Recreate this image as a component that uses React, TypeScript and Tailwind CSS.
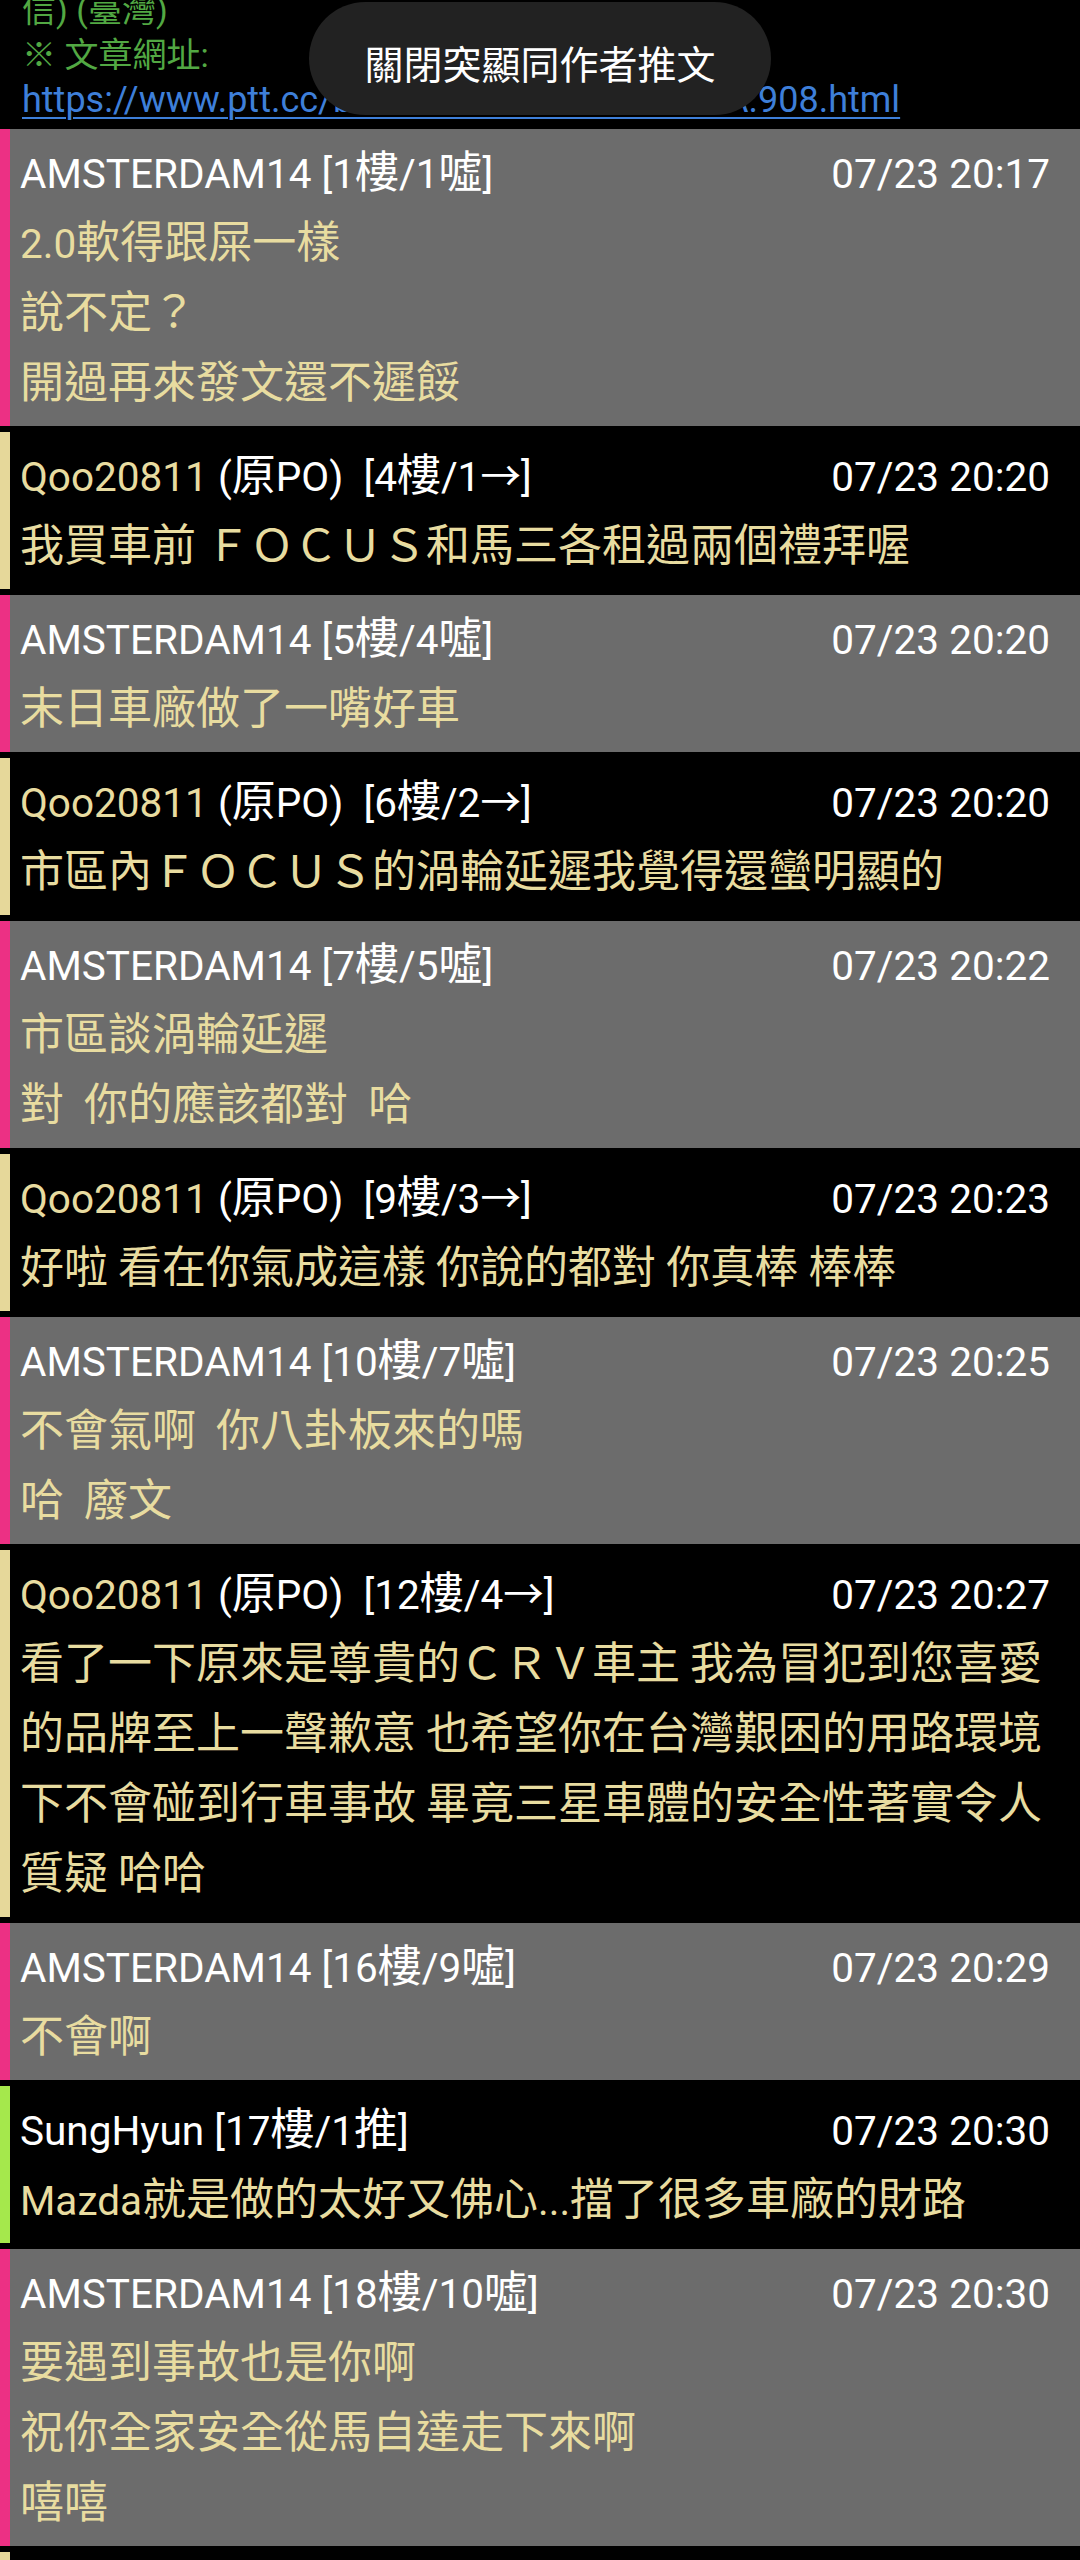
import React from "react";

type Kind = "boo" | "arrow" | "push";

type Post = {
  user: string;
  tag: string;
  time: string;
  kind: Kind;
  op?: boolean;
  lines: string[];
};

const posts: Post[] = [
  { user: "AMSTERDAM14", tag: "[1樓/1噓]", time: "07/23 20:17", kind: "boo", lines: ["2.0軟得跟屎一樣", "說不定？", "開過再來發文還不遲餒"] },
  { user: "Qoo20811", op: true, tag: "[4樓/1→]", time: "07/23 20:20", kind: "arrow", lines: ["我買車前 ＦＯＣＵＳ和馬三各租過兩個禮拜喔"] },
  { user: "AMSTERDAM14", tag: "[5樓/4噓]", time: "07/23 20:20", kind: "boo", lines: ["末日車廠做了一嘴好車"] },
  { user: "Qoo20811", op: true, tag: "[6樓/2→]", time: "07/23 20:20", kind: "arrow", lines: ["市區內ＦＯＣＵＳ的渦輪延遲我覺得還蠻明顯的"] },
  { user: "AMSTERDAM14", tag: "[7樓/5噓]", time: "07/23 20:22", kind: "boo", lines: ["市區談渦輪延遲", "對  你的應該都對  哈"] },
  { user: "Qoo20811", op: true, tag: "[9樓/3→]", time: "07/23 20:23", kind: "arrow", lines: ["好啦 看在你氣成這樣 你說的都對 你真棒 棒棒"] },
  { user: "AMSTERDAM14", tag: "[10樓/7噓]", time: "07/23 20:25", kind: "boo", lines: ["不會氣啊  你八卦板來的嗎", "哈  廢文"] },
  {
    user: "Qoo20811",
    op: true,
    tag: "[12樓/4→]",
    time: "07/23 20:27",
    kind: "arrow",
    lines: [
      "看了一下原來是尊貴的ＣＲＶ車主 我為冒犯到您喜愛",
      "的品牌至上一聲歉意 也希望你在台灣艱困的用路環境",
      "下不會碰到行車事故 畢竟三星車體的安全性著實令人",
      "質疑 哈哈",
    ],
  },
  { user: "AMSTERDAM14", tag: "[16樓/9噓]", time: "07/23 20:29", kind: "boo", lines: ["不會啊"] },
  { user: "SungHyun", tag: "[17樓/1推]", time: "07/23 20:30", kind: "push", lines: ["Mazda就是做的太好又佛心...擋了很多車廠的財路"] },
  { user: "AMSTERDAM14", tag: "[18樓/10噓]", time: "07/23 20:30", kind: "boo", lines: ["要遇到事故也是你啊", "祝你全家安全從馬自達走下來啊", "嘻嘻"] },
  { user: "Qoo20811", op: true, tag: "[19樓/5→]", time: "07/23 20:31", kind: "arrow", lines: ["好喔 謝謝你的祝福"] },
];

const CJK = /([\u2e80-\u9fff\uf900-\ufaff\uff00-\uffef\u3000-\u303f]+)/;

// CJK glyphs render a bit wider than the latin ones on the phone
function Mixed({ text }: { text: string }) {
  const parts = text.split(CJK);
  return (
    <>
      {parts.map((p, i) =>
        p && CJK.test(p) ? (
          <span key={i} className="text-[44px] leading-none [font-family:'Noto_Sans_CJK_TC',sans-serif]">
            {p}
          </span>
        ) : (
          <span key={i}>{p}</span>
        )
      )}
    </>
  );
}

const bg: Record<Kind, string> = {
  boo: "bg-[#6c6c6c]",
  arrow: "bg-black",
  push: "bg-black",
};

const bar: Record<Kind, string> = {
  boo: "bg-[#ec3084]",
  arrow: "bg-[#e6d89a]",
  push: "bg-[#a5e84c]",
};

function Comment({ post }: { post: Post }) {
  return (
    <div className={`flex ${bg[post.kind]}`}>
      <div className={`w-[10px] shrink-0 ${bar[post.kind]}`} />
      <div className="flex-1 pl-[10px] pr-[30px] pt-[10px] pb-[7px]">
        <div className="h-[70px] leading-[70px] whitespace-pre flex justify-between">
          <div>
            {post.op ? (
              <>
                <span className="text-[#e8dca0]">{post.user}</span>
                <span className="text-white">
                  <Mixed text={` (原PO)  ${post.tag}`} />
                </span>
              </>
            ) : (
              <span className="text-white">
                <Mixed text={`${post.user} ${post.tag}`} />
              </span>
            )}
          </div>
          <div className="text-white">{post.time}</div>
        </div>
        {post.lines.map((line, i) => (
          <div key={i} className="h-[70px] leading-[70px] whitespace-pre text-[#e8dca0]">
            <Mixed text={line} />
          </div>
        ))}
      </div>
    </div>
  );
}

export default function App() {
  return (
    <div className="relative w-[1080px] bg-black text-[40.5px] [font-family:Roboto,'Noto_Sans_CJK_TC',sans-serif]">
      {/* tail of the article body */}
      <div className="h-[129px] overflow-hidden flex flex-col justify-end pb-[6px] pl-[22px] text-[34px] leading-[45px] whitespace-pre">
        <div className="text-[#52a843]">信) (臺灣)</div>
        <div className="text-[#52a843]">※ 文章網址:</div>
        <div className="text-[#3e7fd9] text-[36px] underline decoration-2 underline-offset-[5px]">
          https://www.ptt.cc/bbs/car/M.1595505112.A.908.html
        </div>
      </div>

      <div className="flex flex-col gap-[6px]">
        {posts.map((p, i) => (
          <Comment key={i} post={p} />
        ))}
      </div>

      {/* toast */}
      <div className="absolute top-[2px] left-1/2 -translate-x-1/2 w-[462px] h-[113px] rounded-full bg-[#222222] flex items-center justify-center pt-[8px]">
        <span className="text-white text-[39px] leading-none [font-family:'Noto_Sans_CJK_TC',sans-serif]">關閉突顯同作者推文</span>
      </div>
    </div>
  );
}
